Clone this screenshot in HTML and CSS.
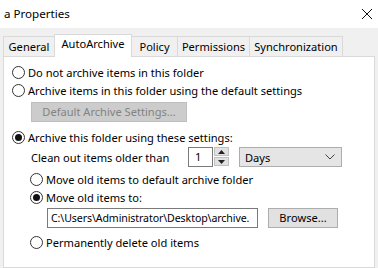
FILE: index.html
```html
<!DOCTYPE html>
<html lang="en">
<head>
  <meta charset="utf-8" />
  <title>a Properties</title>
  <link rel="stylesheet" href="styles.css">
</head>
<body>
  <div class="titlebar">
    <span class="title">a Properties</span>
    <svg class="close" width="12" height="12" viewBox="0 0 12 12"><path d="M1 1 L11 11 M11 1 L1 11" stroke="#111" stroke-width="1" fill="none"/></svg>
  </div>

  <div class="dialog">
    <div class="tabs">
      <div class="tab">General</div>
      <div class="tab active">AutoArchive</div>
      <div class="tab">Policy</div>
      <div class="tab">Permissions</div>
      <div class="tab">Synchronization</div>
    </div>

    <div class="panel">
      <label class="opt"><span class="radio"></span>Do not archive items in this folder</label>
      <label class="opt"><span class="radio"></span>Archive items in this folder using the default settings</label>
      <div class="btn disabled wide">Default Archive Settings...</div>

      <label class="opt sect"><span class="radio on"></span>Archive this folder using these settings:</label>
      <div class="sub">
        <div class="clean">
          <span class="clean-label">Clean out items older than</span>
          <div class="spin">
            <div class="spin-box">1</div>
            <div class="spin-btns">
              <div class="arrow"><svg width="7" height="4" viewBox="0 0 7 4"><path d="M0 4 L3.5 0 L7 4 Z" fill="#222"/></svg></div>
              <div class="arrow"><svg width="7" height="4" viewBox="0 0 7 4"><path d="M0 0 L3.5 4 L7 0 Z" fill="#222"/></svg></div>
            </div>
          </div>
          <div class="select">
            <span>Days</span>
            <svg width="10" height="6" viewBox="0 0 10 6"><path d="M0.5 0.5 L5 5 L9.5 0.5" stroke="#444" stroke-width="1" fill="none"/></svg>
          </div>
        </div>
        <label class="opt"><span class="radio"></span>Move old items to default archive folder</label>
        <label class="opt"><span class="radio on"></span>Move old items to:</label>
        <div class="path-row">
          <div class="path">C:\Users\Administrator\Desktop\archive.</div>
          <div class="btn browse">Browse...</div>
        </div>
        <label class="opt"><span class="radio"></span>Permanently delete old items</label>
      </div>
    </div>
  </div>
</body>
</html>
```

FILE: styles.css
```css
html { overflow: hidden; }

body {
  margin: 0;
  width: 378px;
  height: 268px;
  overflow: hidden;
  font-family: "Noto Sans", "Open Sans", sans-serif;
  font-size: 11.1px;
  color: #000;
  background: #f0f0f0;
}

.titlebar {
  height: 28px;
  background: #fff;
  display: flex;
  align-items: center;
  justify-content: space-between;
  padding: 0 5px 1px 4px;
  box-sizing: border-box;
}

.title { font-size: 11.6px; }

.dialog {
  padding: 6px 3px 0 3px;
}

.tabs {
  display: flex;
  align-items: flex-end;
  height: 22px;
}

.tab {
  box-sizing: border-box;
  height: 20px;
  line-height: 20px;
  text-align: center;
  border: 1px solid #d9d9d9;
  border-bottom: none;
  margin-left: -1px;
  background: #f0f0f0;
  white-space: nowrap;
}
.tab:first-child { margin-left: 0; width: 52px; }
.tab:nth-child(2) { width: 78px; }
.tab:nth-child(3) { width: 47px; }
.tab:nth-child(4) { width: 73px; }
.tab:nth-child(5) { width: 94px; }

.tab.active {
  background: #fff;
  height: 23px;
  line-height: 18px;
  margin-bottom: -1px;
  position: relative;
  z-index: 1;
}

.panel {
  background: #fff;
  border: 1px solid #d9d9d9;
  height: 212px;
  padding: 6px 0 0 8px;
  box-sizing: border-box;
}

.opt {
  display: flex;
  align-items: center;
  height: 18px;
  white-space: nowrap;
}

.radio {
  width: 11px;
  height: 11px;
  border: 1px solid #333;
  border-radius: 50%;
  background: #fff;
  margin-right: 3px;
  position: relative;
  flex: none;
}
.radio.on::after {
  content: "";
  position: absolute;
  left: 2px;
  top: 2px;
  width: 7px;
  height: 7px;
  border-radius: 50%;
  background: #111;
}

.btn {
  height: 18px;
  line-height: 18px;
  text-align: center;
  border: 1px solid #adadad;
  background: #e1e1e1;
}

.btn.wide {
  width: 154px;
  margin: 3px 0 0 19px;
}

.btn.disabled {
  background: #cccccc;
  border-color: #bfbfbf;
  color: #838383;
}

.sect { margin-top: 6px; }

.sub { padding-left: 18px; }

.clean {
  display: flex;
  align-items: center;
  height: 20px;
  margin-top: 1px;
  margin-bottom: 3px;
}

.clean-label {
  width: 157px;
  padding-left: 1px;
}

.spin { display: flex; }

.spin-box {
  width: 17px;
  height: 18px;
  line-height: 18px;
  border: 1px solid #7a7a7a;
  padding-left: 6px;
  background: #fff;
}

.spin-btns {
  display: flex;
  flex-direction: column;
  margin-left: 1px;
  gap: 1px;
}

.arrow {
  width: 15px;
  height: 9px;
  background: #e1e1e1;
  border: 1px solid #c0c0c0;
  box-sizing: border-box;
  display: flex;
  align-items: center;
  justify-content: center;
}

.select {
  width: 90px;
  height: 18px;
  margin-left: 10px;
  border: 1px solid #adadad;
  background: #e5e5e5;
  display: flex;
  align-items: center;
  justify-content: space-between;
  padding: 0 6px 0 5px;
}

.path-row {
  display: flex;
  align-items: center;
  margin: 2px 0 5px 17px;
  height: 20px;
}

.path {
  width: 206px;
  height: 18px;
  line-height: 18px;
  border: 1px solid #7a7a7a;
  padding-left: 3px;
  font-size: 10.6px;
  letter-spacing: -0.1px;
  overflow: hidden;
  white-space: nowrap;
}

.btn.browse {
  width: 68px;
  margin-left: 10px;
}
```
